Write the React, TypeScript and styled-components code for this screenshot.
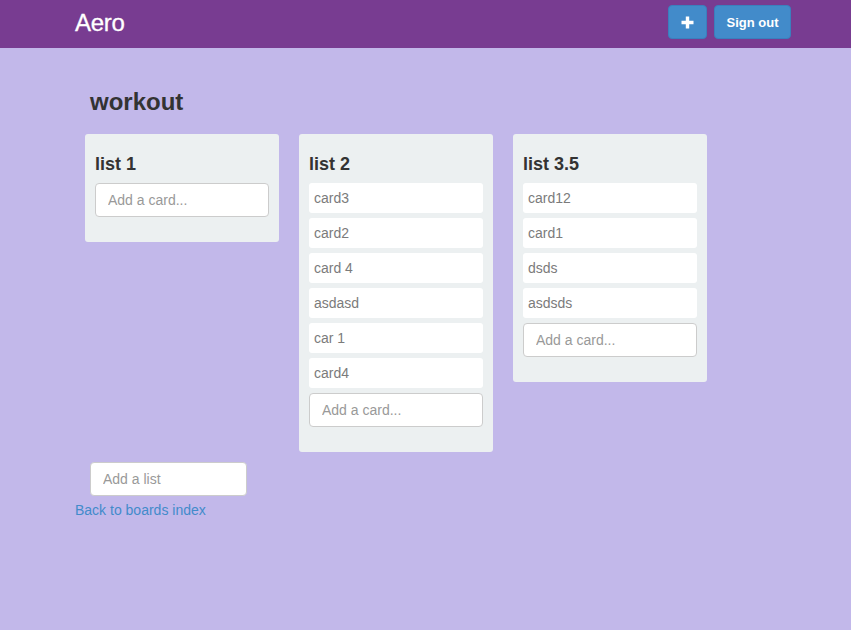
import React from "react";
import styled, { createGlobalStyle } from "styled-components";

const GlobalStyle = createGlobalStyle`
  html, body {
    margin: 0;
    padding: 0;
    background: #c2b8ea;
    font-family: "Liberation Sans", Arial, sans-serif;
    font-size: 14px;
    line-height: 20px;
    color: #333;
  }
  * { box-sizing: border-box; }
`;

const Page = styled.div`
  min-height: 630px;
  background: #c2b8ea;
`;

const NavBar = styled.header`
  height: 48px;
  background: #783c91;
  display: flex;
  justify-content: space-between;
  align-items: flex-start;
  padding: 0 60px 0 75px;
`;

const Brand = styled.a`
  font-size: 24px;
  line-height: 26px;
  color: #fff;
  text-decoration: none;
  margin-top: 10px;
  letter-spacing: -0.3px;
  -webkit-text-stroke: 0.3px #fff;
`;

const NavActions = styled.div`
  display: flex;
  gap: 7px;
  padding-top: 5px;
`;

const NavButton = styled.button<{ $square?: boolean }>`
  height: 34px;
  width: ${(p) => (p.$square ? "39px" : "77px")};
  padding: 0;
  background: #428bca;
  border: 1px solid #3a7fbd;
  border-radius: 4px;
  color: #fff;
  font-family: "Liberation Sans", Arial, sans-serif;
  font-size: 13px;
  font-weight: bold;
  display: flex;
  align-items: center;
  justify-content: center;
  cursor: pointer;
`;

const Main = styled.main`
  padding: 41px 0 0 75px;
`;

const BoardTitle = styled.h3`
  margin: 0 0 19px 15px;
  font-size: 24px;
  line-height: 26px;
  font-weight: bold;
  color: #333;
`;

const Lists = styled.div`
  display: flex;
  align-items: flex-start;
  gap: 20px;
  padding-left: 10px;
`;

const List = styled.section`
  width: 194px;
  background: #ecf0f1;
  border-radius: 3px;
  padding: 20px 10px 25px;
  display: flex;
  flex-direction: column;
`;

const ListTitle = styled.h4`
  margin: 0 0 9px;
  font-size: 18px;
  line-height: 20px;
  font-weight: bold;
  color: #333;
`;

const Cards = styled.div`
  display: flex;
  flex-direction: column;
  gap: 5px;
  margin-bottom: 5px;
`;

const Card = styled.div`
  height: 30px;
  background: #fff;
  border-radius: 3px;
  padding: 5px;
  color: #7b7b7b;
  font-size: 14px;
  line-height: 20px;
`;

const TextInput = styled.input<{ $width?: number }>`
  display: block;
  width: ${(p) => (p.$width ? `${p.$width}px` : "100%")};
  height: 34px;
  padding: 6px 12px;
  border: 1px solid #ccc;
  border-radius: 4px;
  background: #fff;
  font-family: "Liberation Sans", Arial, sans-serif;
  font-size: 14px;
  color: #555;
  outline: none;
  &::placeholder { color: #999; }
`;

const AddListRow = styled.div`
  padding: 10px 0 0 15px;
`;

const BackLink = styled.a`
  display: block;
  margin-top: 4px;
  color: #428bca;
  text-decoration: none;
  font-size: 14px;
  line-height: 20px;
`;

const PlusIcon = () => (
  <svg width="13" height="13" viewBox="0 0 13 13" aria-hidden="true">
    <path d="M6.5 0.5v12M0.5 6.5h12" stroke="#fff" strokeWidth="3.4" />
  </svg>
);

const lists = [
  { title: "list 1", cards: [] as string[] },
  { title: "list 2", cards: ["card3", "card2", "card 4", "asdasd", "car 1", "card4"] },
  { title: "list 3.5", cards: ["card12", "card1", "dsds", "asdsds"] },
];

export default function App() {
  return (
    <Page>
      <GlobalStyle />
      <NavBar>
        <Brand href="#">Aero</Brand>
        <NavActions>
          <NavButton $square aria-label="Add">
            <PlusIcon />
          </NavButton>
          <NavButton>Sign out</NavButton>
        </NavActions>
      </NavBar>
      <Main>
        <BoardTitle>workout</BoardTitle>
        <Lists>
          {lists.map((l) => (
            <List key={l.title}>
              <ListTitle>{l.title}</ListTitle>
              {l.cards.length > 0 && (
                <Cards>
                  {l.cards.map((c) => (
                    <Card key={c}>{c}</Card>
                  ))}
                </Cards>
              )}
              <TextInput placeholder="Add a card..." />
            </List>
          ))}
        </Lists>
        <AddListRow>
          <TextInput $width={157} placeholder="Add a list" />
        </AddListRow>
        <BackLink href="#">Back to boards index</BackLink>
      </Main>
    </Page>
  );
}
